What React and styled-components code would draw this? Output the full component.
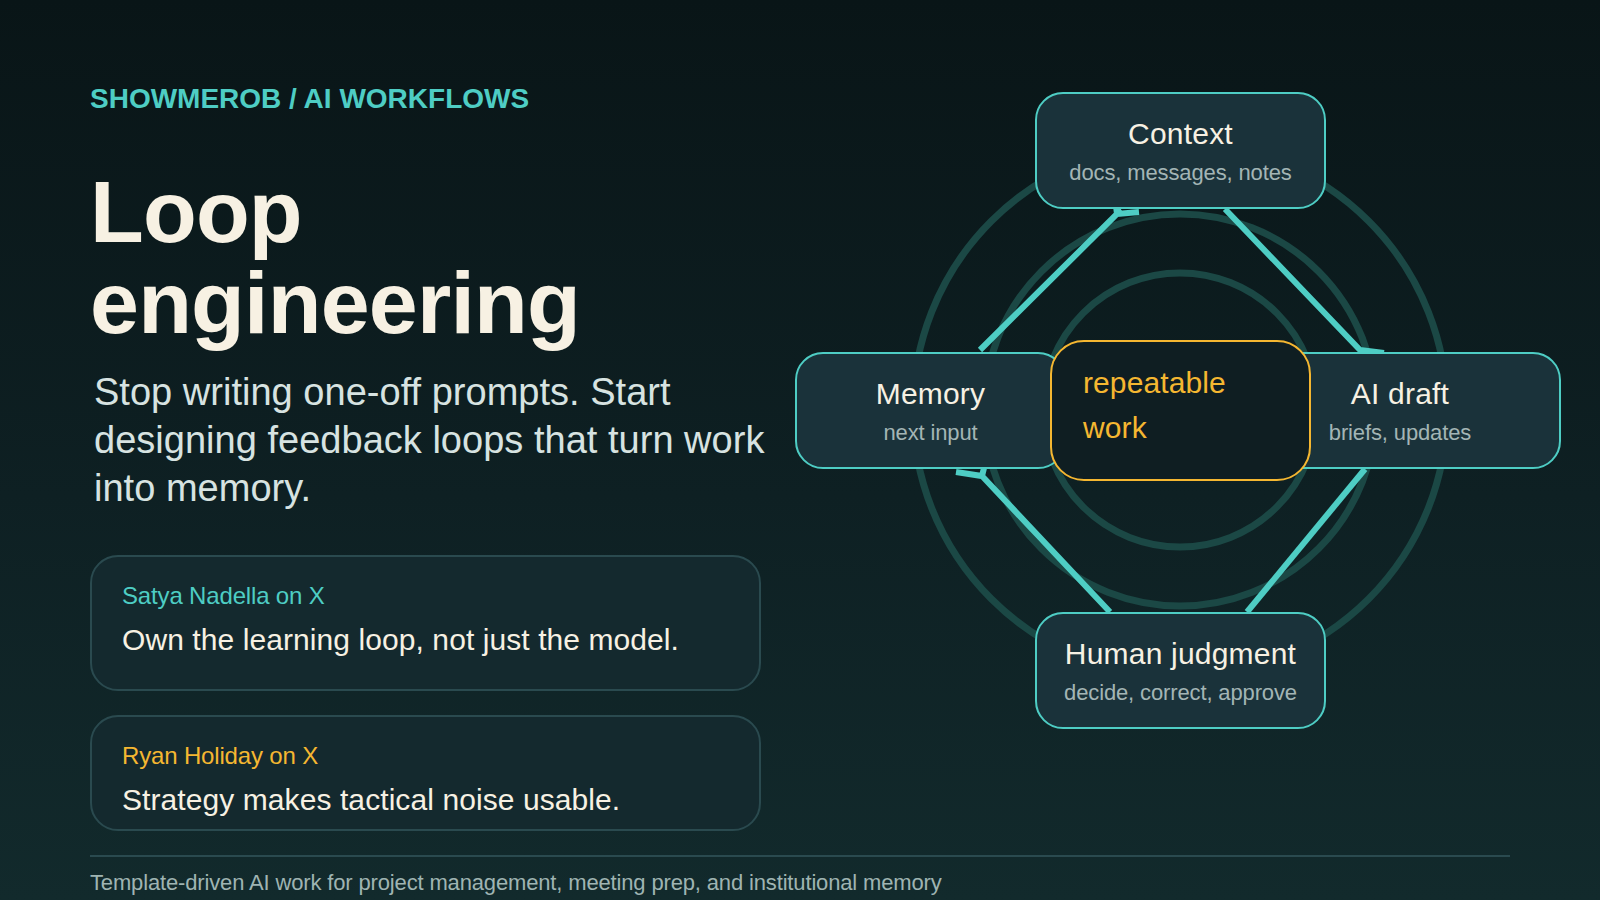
import React from 'react';
import styled, { createGlobalStyle } from 'styled-components';

const GlobalStyle = createGlobalStyle`
  html, body {
    margin: 0;
    padding: 0;
    background: #0a1517;
  }
  * {
    box-sizing: border-box;
  }
`;

const Slide = styled.div`
  width: 1600px;
  height: 900px;
  padding: 0 90px;
  overflow: hidden;
  font-family: "Liberation Sans", Arial, sans-serif;
  background: linear-gradient(180deg, #091517 0%, #0e2023 55%, #122a2c 100%);
`;

const Main = styled.div`
  display: flex;
  align-items: flex-start;
  gap: 34px;
`;

const Intro = styled.div`
  width: 671px;
  flex-shrink: 0;
  padding-top: 83px;
`;

const Eyebrow = styled.div`
  font-size: 28px;
  line-height: 32px;
  font-weight: 700;
  color: #4ecdc4;
`;

const Title = styled.h1`
  margin: 51px 0 0;
  font-size: 88px;
  line-height: 91px;
  font-weight: 700;
  letter-spacing: -0.8px;
  color: #f7f1e3;
`;

const Lede = styled.p`
  margin: 20px 0 0 4px;
  width: 680px;
  font-size: 38px;
  line-height: 48px;
  letter-spacing: 0.02px;
  color: #d7e3e1;
`;

const Quotes = styled.div`
  display: flex;
  flex-direction: column;
  gap: 24px;
  margin-top: 43px;
`;

const Quote = styled.div`
  height: ${p => p.$height}px;
  padding: 24px 30px 0;
  border: 2px solid #2a4a4f;
  border-radius: 28px;
  background: #14292e;
`;

const Source = styled.div`
  font-size: 24px;
  line-height: 30px;
  letter-spacing: -0.16px;
  color: ${p => p.$color};
`;

const QuoteText = styled.div`
  margin-top: 10px;
  font-size: 30px;
  line-height: 38px;
  letter-spacing: 0.08px;
  color: #f7f1e3;
`;

const Footer = styled.footer`
  margin-top: 24px;
  padding-top: 13px;
  border-top: 2px solid #2a4a4f;
  font-size: 22px;
  line-height: 26px;
  letter-spacing: -0.15px;
  color: #9fb4b2;
  white-space: nowrap;
`;

const Diagram = styled.div`
  position: relative;
  width: 766px;
  height: 660px;
  margin-top: 80px;
  flex-shrink: 0;
`;

const Wires = styled.svg`
  position: absolute;
  left: 0;
  top: 0;
  display: block;
`;

const Node = styled.div`
  position: absolute;
  left: ${p => p.$left}px;
  top: ${p => p.$top}px;
  width: ${p => p.$width}px;
  height: 117px;
  display: flex;
  flex-direction: column;
  align-items: center;
  padding-top: 22px;
  border: 2px solid #4ecdc4;
  border-radius: 28px;
  background: #1a323a;
`;

const NodeTitle = styled.div`
  font-size: 30px;
  line-height: 36px;
  letter-spacing: 0.2px;
  color: #f7f1e3;
`;

const NodeSub = styled.div`
  margin-top: 7px;
  font-size: 22px;
  line-height: 28px;
  letter-spacing: -0.13px;
  color: #a3b5b5;
`;

const Hub = styled.div`
  position: absolute;
  left: 255px;
  top: 260px;
  width: 261px;
  height: 141px;
  padding: 18px 31px;
  border: 2px solid #f5b731;
  border-radius: 34px;
  background: #0f1e22;
  font-size: 30px;
  line-height: 45px;
  letter-spacing: 0.1px;
  color: #f5b731;
`;

const nodes = [
  { title: 'Context', sub: 'docs, messages, notes', left: 240, top: 12, width: 291 },
  { title: 'Memory', sub: 'next input', left: 0, top: 272, width: 271 },
  { title: 'AI draft', sub: 'briefs, updates', left: 444, top: 272, width: 322 },
  { title: 'Human judgment', sub: 'decide, correct, approve', left: 240, top: 532, width: 291 }
];

const rings = [267, 196, 137];

const wires = [
  '980,350 1119,212 1116,206 1117,214 1139,212',
  '1225,209 1360,350 1384,353',
  '1365,469 1247,612',
  '1110,612 982,476 984,468 982,476 956,472'
];

const App = () => (
  <Slide>
    <GlobalStyle />
    <Main>
      <Intro>
        <Eyebrow>SHOWMEROB / AI WORKFLOWS</Eyebrow>
        <Title>Loop<br />engineering</Title>
        <Lede>Stop writing one-off prompts. Start designing feedback loops that turn work into memory.</Lede>
        <Quotes>
          <Quote $height={136}>
            <Source $color="#4ecdc4">Satya Nadella on X</Source>
            <QuoteText>Own the learning loop, not just the model.</QuoteText>
          </Quote>
          <Quote $height={116}>
            <Source $color="#f5b731">Ryan Holiday on X</Source>
            <QuoteText>Strategy makes tactical noise usable.</QuoteText>
          </Quote>
        </Quotes>
      </Intro>
      <Diagram>
        <Wires width="766" height="660" viewBox="795 80 766 660" fill="none">
          {rings.map(r => (
            <circle key={r} cx="1180" cy="410" r={r} stroke="#1b4845" strokeWidth="7" />
          ))}
          {wires.map(points => (
            <polyline key={points} points={points} stroke="#4ecdc4" strokeWidth="6" />
          ))}
        </Wires>
        {nodes.map(n => (
          <Node key={n.title} $left={n.left} $top={n.top} $width={n.width}>
            <NodeTitle>{n.title}</NodeTitle>
            <NodeSub>{n.sub}</NodeSub>
          </Node>
        ))}
        <Hub>repeatable<br />work</Hub>
      </Diagram>
    </Main>
    <Footer>Template-driven AI work for project management, meeting prep, and institutional memory</Footer>
  </Slide>
);

export default App;
